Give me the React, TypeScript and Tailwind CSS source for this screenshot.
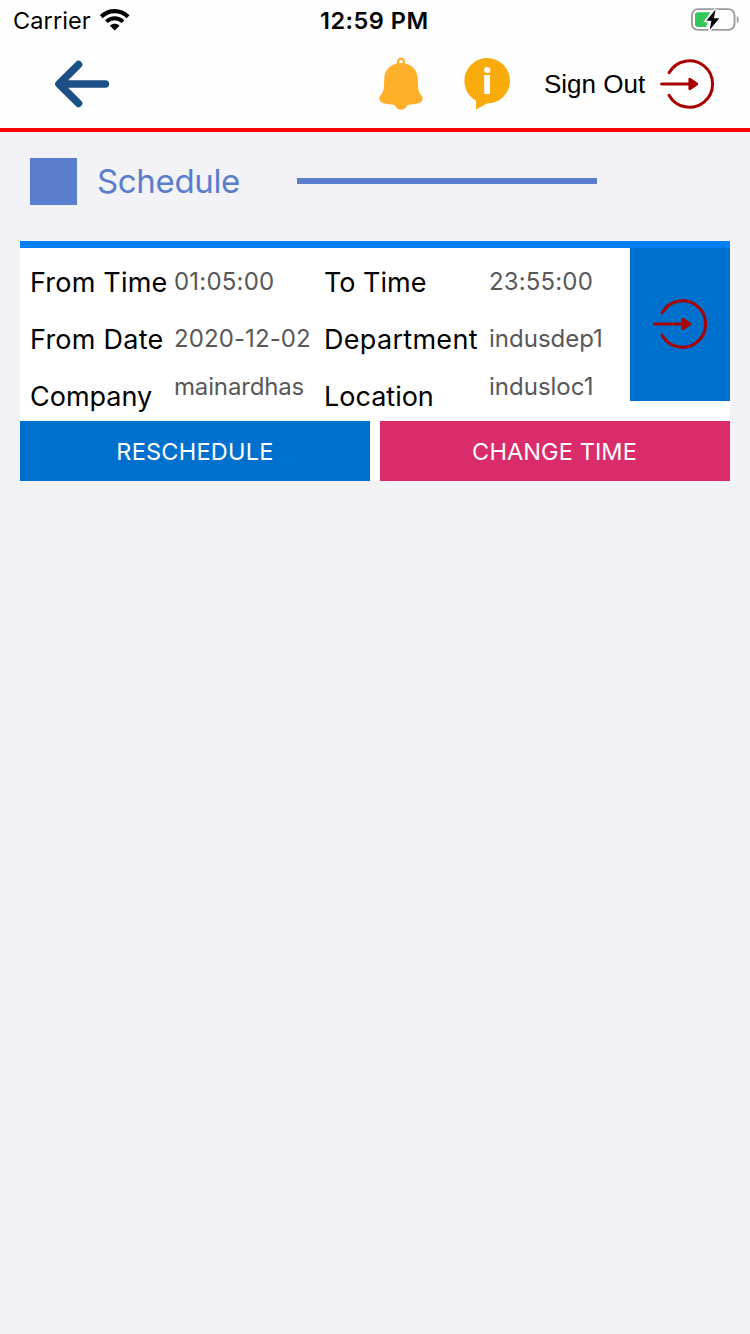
import React from "react";

function ExitIcon() {
  return (
    <svg width="56" height="52" viewBox="0.8 0 56 52" fill="none" className="shrink-0">
      <path
        d="M11 14.6 A23.2 23.2 0 1 1 11 37.4"
        stroke="#a90000"
        strokeWidth="3"
        strokeLinecap="round"
      />
      <path d="M3.5 26 H32" stroke="#a90000" strokeWidth="3.2" strokeLinecap="round" />
      <path d="M31.6 21.2 L38.6 26 L31.6 30.8 Z" fill="#a90000" stroke="#a90000" strokeWidth="2.8" strokeLinejoin="round" />
    </svg>
  );
}

function StatusBar() {
  return (
    <div className="flex h-10 items-center text-[23.5px] leading-10 text-black">
      <div className="flex w-[320px] items-center pl-[13px]">
        <span className="w-[87px] pt-0.5 tracking-[0.1px]">Carrier</span>
        <svg width="30" height="22" viewBox="0 0 30 22" fill="none">
          <path d="M1.3 7.7 C9.1 0.3 20.3 0.3 28.1 7.7" stroke="#000" strokeWidth="4.2" />
          <path d="M6.4 12.6 C11.4 8 18 8 23 12.6" stroke="#000" strokeWidth="4" />
          <path d="M9.9 16.8 C12.8 14.2 16.6 14.2 19.5 16.8 L14.7 21.4 Z" fill="#000" />
        </svg>
      </div>
      <span className="w-[370px] pt-0.5 font-semibold tracking-[0.5px]">12:59 PM</span>
      <svg width="50" height="26" viewBox="0 0 50 26" fill="none" className="mb-px">
        <rect x="1.9" y="2.1" width="42.6" height="20.8" rx="6" stroke="#9c9c9d" strokeWidth="1.9" />
        <path d="M46.8 9 C49.4 10.2 49.4 15.2 46.8 16.4 Z" fill="#9c9c9d" />
        <path d="M8 5.3 H20.5 L14 14.5 H18 L16 20.1 H8 Q5 20.1 5 17.1 V8.3 Q5 5.3 8 5.3 Z" fill="#34c759" />
        <path d="M25.6 2.5 L16.4 13.7 H21.4 L19.8 22.7 L29.3 11.3 H23.8 Z" fill="#000" stroke="#fff" strokeWidth="3" />
        <path d="M25.6 2.5 L16.4 13.7 H21.4 L19.8 22.7 L29.3 11.3 H23.8 Z" fill="#000" />
      </svg>
    </div>
  );
}

function Toolbar() {
  return (
    <div className="flex h-[88px] items-center">
      <svg width="60" height="52" viewBox="0 0 60 52" fill="none" className="ml-[52px]">
        <path
          d="M53.3 26 H9 M26.5 6.6 L7 26 L26.5 45.4"
          stroke="#1b4f85"
          strokeWidth="7.6"
          strokeLinecap="round"
          strokeLinejoin="round"
        />
      </svg>
      <svg width="46" height="54" viewBox="0 0 46 54" className="ml-[266px]">
        <circle cx="23" cy="4.9" r="3" fill="none" stroke="#ffb02a" strokeWidth="2.2" />
        <path
          d="M23 6 C32.5 6 39.7 12.5 39.8 22 C40 32 40.2 34.4 43.8 38.8 C46.2 43.5 43 46.2 38 46.7 C33.5 47.4 31.5 47.8 29.4 48 C27 54.3 19 54.3 16.6 48 C14.5 47.8 12.5 47.4 8 46.7 C3 46.2 -0.2 43.5 2.2 38.8 C5.8 34.4 6 32 6.2 22 C6.3 12.5 13.5 6 23 6 Z"
          fill="#ffb02a"
        />
        <ellipse cx="23" cy="4.9" rx="1.9" ry="1.2" fill="#fff" />
      </svg>
      <svg width="48" height="54" viewBox="0 0 48 54" className="ml-[39px]">
        <path d="M24 1 A23 22.8 0 1 1 24 46.6 L13 52.6 L13 43.6 A23 22.8 0 0 1 24 1 Z" fill="#f9ab0b" />
        <circle cx="24.2" cy="13" r="3.1" fill="#fff" />
        <path d="M20.9 18 H27 V37 H21.2 V20 H20.9 Z" fill="#fff" />
      </svg>
      <span className="ml-[33px] w-[115px] font-['Liberation_Sans',Arial,sans-serif] text-[26px] whitespace-nowrap">Sign Out</span>
      <ExitIcon />
    </div>
  );
}

function ScheduleCard() {
  return (
    <section className="mx-5 bg-white">
      <div className="h-[7px] bg-[#007ff9]" />
      <div className="flex h-[173px]">
        <div className="grid w-[610px] grid-cols-[144px_150px_165px_141px] grid-rows-[57px_57px_57px] items-center pt-[6px] pl-[10px] text-[24px] leading-8 whitespace-nowrap text-[#58585a]">
          <span className="text-[27px] tracking-[0.2px] text-black">From Time</span>
          <span className="pb-0.5 tracking-[0.2px]">01:05:00</span>
          <span className="text-[27px] text-black">To Time</span>
          <span className="pb-0.5 tracking-[0.15px]">23:55:00</span>
          <span className="text-[27px] tracking-[0.25px] text-black">From Date</span>
          <span className="pb-0.5 tracking-[0.1px]">2020-12-02</span>
          <span className="text-[27px] tracking-[0.3px] text-black">Department</span>
          <span className="pb-0.5">indusdep1</span>
          <span className="text-[27px] text-black">Company</span>
          <span className="pb-[19px] tracking-[-0.15px]">mainardhas</span>
          <span className="text-[27px] text-black">Location</span>
          <span className="pb-[19px]">indusloc1</span>
        </div>
        <button className="flex h-[153px] w-[100px] items-center justify-center bg-[#0070ce] pb-px" aria-label="Open">
          <ExitIcon />
        </button>
      </div>
      <div className="flex gap-[10px] text-[23.5px] text-white">
        <button className="h-[60px] w-[350px] bg-[#0070ce] pt-0.5 tracking-[0.25px]">RESCHEDULE</button>
        <button className="h-[60px] w-[350px] bg-[#da2c6a] pt-0.5 pr-px tracking-[0.1px]">CHANGE TIME</button>
      </div>
    </section>
  );
}

export default function App() {
  return (
    <main className="h-[1334px] w-[750px] overflow-hidden bg-[#f2f2f7] font-['Inter',sans-serif]">
      <header className="h-[132px] border-b-4 border-[#ff0000] bg-[#fefefe]">
        <StatusBar />
        <Toolbar />
      </header>
      <div className="flex h-[109px] items-start pt-[26px] pl-[30px]">
        <div className="size-[47px] bg-[#5a7ecd]" />
        <h1 className="ml-5 w-[200px] text-[33px] leading-[47px] font-normal tracking-[-0.35px] text-[#5a7ecd]">Schedule</h1>
        <div className="mt-5 h-[6px] w-[300px] bg-[#5a7ecd]" />
      </div>
      <ScheduleCard />
    </main>
  );
}
